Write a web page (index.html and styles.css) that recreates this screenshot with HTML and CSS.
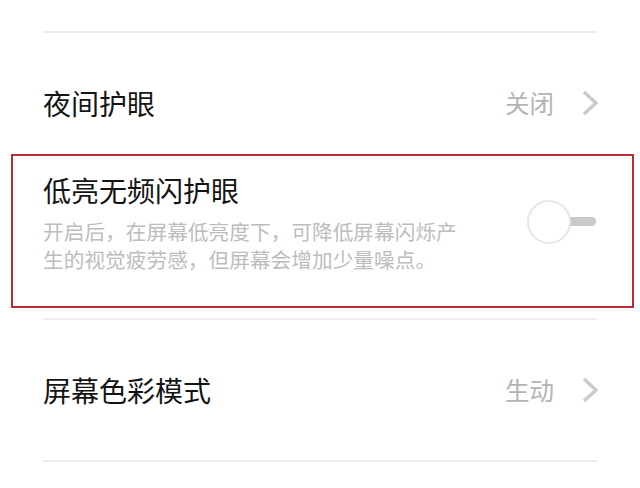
FILE: index.html
```html
<!DOCTYPE html>
<html lang="zh-CN">
<head>
<meta charset="utf-8">
<title>显示设置</title>
<link rel="stylesheet" href="styles.css">
</head>
<body>
<div class="page">
  <div class="top-gap"></div>
  <div class="divider"></div>
  <div class="row">
    <span class="label">夜间护眼</span>
    <span class="value">关闭</span>
    <svg class="chev" width="16" height="26" viewBox="0 0 16 26"><polyline points="2,2 14,13 2,24" fill="none" stroke="#cbcbcb" stroke-width="3.6"/></svg>
  </div>
  <div class="item">
    <div class="item-text">
      <div class="label title">低亮无频闪护眼</div>
      <div class="desc">开启后，在屏幕低亮度下，可降低屏幕闪烁产生的视觉疲劳感，但屏幕会增加少量噪点。</div>
    </div>
    <div class="toggle">
      <div class="track"></div>
      <div class="knob"></div>
    </div>
    <div class="highlight"></div>
  </div>
  <div class="divider"></div>
  <div class="row">
    <span class="label">屏幕色彩模式</span>
    <span class="value">生动</span>
    <svg class="chev" width="16" height="26" viewBox="0 0 16 26"><polyline points="2,2 14,13 2,24" fill="none" stroke="#cbcbcb" stroke-width="3.6"/></svg>
  </div>
  <div class="divider"></div>
</div>
</body>
</html>
```
FILE: styles.css
```css
html, body {
  margin: 0;
  padding: 0;
  background: #ffffff;
}
body {
  width: 640px;
  height: 488px;
  overflow: hidden;
  font-family: "Noto Sans CJK SC", "Noto Sans", sans-serif;
}
.page {
  padding: 0 43px;
}
.top-gap {
  height: 31px;
}
.divider {
  height: 2px;
  background: #ececec;
}
.row {
  height: 140px;
  display: flex;
  align-items: center;
}
.label {
  font-size: 28px;
  line-height: 34px;
  color: #141414;
  font-weight: 400;
}
.row .label {
  flex: 1;
}
.value {
  font-size: 24.5px;
  line-height: 30px;
  color: #b4b4b4;
  margin-right: 28px;
}
.chev {
  display: block;
  margin-right: -1px;
}
.item {
  position: relative;
  display: flex;
  align-items: flex-start;
  padding-bottom: 45px;
}
.item-text {
  flex: 1;
}
.title {
  display: block;
}
.desc {
  width: 430px;
  margin-top: 10px;
  font-size: 20.7px;
  line-height: 28px;
  color: #bdbdbd;
}
.toggle {
  position: relative;
  width: 69px;
  height: 44px;
  margin-top: 27px;
  margin-right: 1px;
}
.track {
  position: absolute;
  right: 0;
  top: 17px;
  width: 40px;
  height: 9px;
  border-radius: 0 5px 5px 0;
  background: #c9c9c9;
}
.knob {
  position: absolute;
  left: 0;
  top: 0;
  width: 40px;
  height: 40px;
  border-radius: 50%;
  border: 2px solid #e6e6e6;
  background: #ffffff;
}
.highlight {
  position: absolute;
  left: -32px;
  right: -37px;
  top: -19px;
  bottom: 10px;
  border: 2.5px solid #bd2a35;
  pointer-events: none;
}
```
